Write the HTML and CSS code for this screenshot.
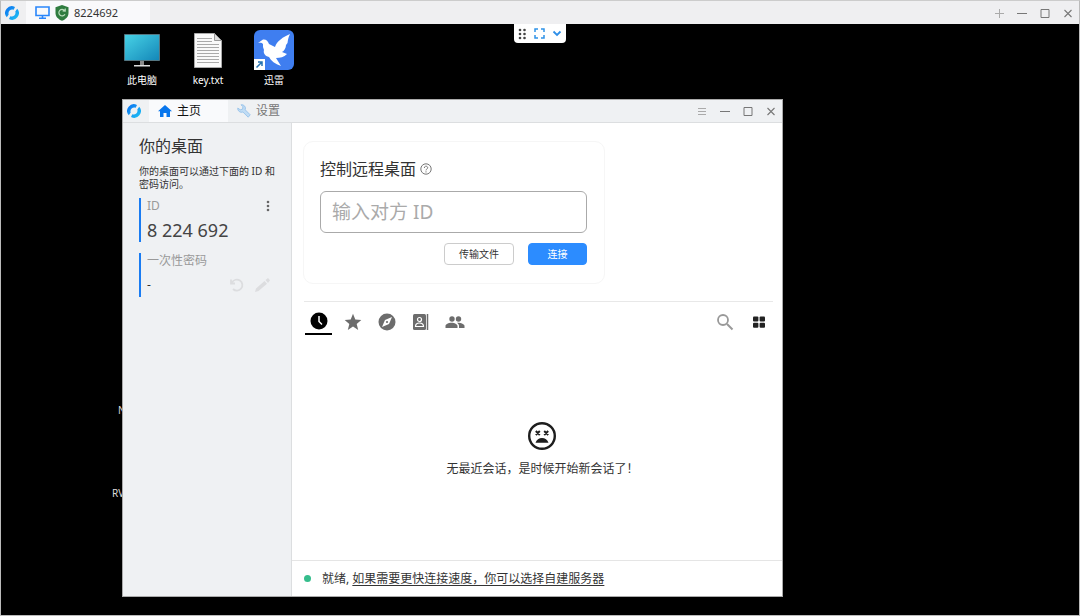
FILE: index.html
```html
<!DOCTYPE html>
<html lang="zh-CN">
<head>
<meta charset="utf-8">
<meta name="viewport" content="width=device-width, initial-scale=1">
<title>8224692</title>
<link rel="stylesheet" href="styles.css">
</head>
<body>
<svg class="defs" aria-hidden="true">
  <defs>
    <linearGradient id="ring" x1="0" y1="0" x2="1" y2="1"><stop offset="0" stop-color="#0a6ff0"/><stop offset="1" stop-color="#20c4f4"/></linearGradient>
    <linearGradient id="screen" x1="0" y1="0" x2="1" y2="1"><stop offset="0" stop-color="#48d3e6"/><stop offset="1" stop-color="#1386b8"/></linearGradient>
    <symbol id="logo" viewBox="0 0 14 14"><path d="M1.800 11.300A6.700 6.700 0 0 1 10 1L8.700 3.700A3.900 3.900 0 0 0 3.700 8.600zM12.200 2.700A6.700 6.700 0 0 1 4 13L5.300 10.300A3.900 3.900 0 0 0 10.300 5.400z" fill="url(#ring)"/></symbol>
    <symbol id="minimize" viewBox="0 0 10 10"><path d="M0 5.500h10" stroke="currentColor"/></symbol>
    <symbol id="maximize" viewBox="0 0 10 10"><path d="M1 1.500h8v8H1z" fill="none" stroke="currentColor"/></symbol>
    <symbol id="close" viewBox="0 0 10 10"><path d="M1.500 2l7 7M8.500 2l-7 7" stroke="currentColor" stroke-width="1.100"/></symbol>
  </defs>
</svg>
<div class="viewer">
  <header class="topbar">
    <svg class="logo"><use href="#logo"/></svg>
    <div class="session-tab">
      <svg width="15" height="13" viewBox="0 0 15 13"><path d="M1 1h13v8.500H1zM7.500 9.500v2.500M4 12.200h7" fill="none" stroke="#2a86fb" stroke-width="1.600"/></svg>
      <svg width="14" height="16" viewBox="0 0 14 16"><path d="M7 0l6.500 2.300V8c0 3.600-2.600 6.200-6.500 7.800C3.100 14.200.5 11.600.5 8V2.300z" fill="#2f7c3f"/><path d="M9.700 5.500A3.300 3.300 0 1 0 10 9.300M7.600 5.800L10.200 6l.1-2.400" fill="none" stroke="#b9dcbb" stroke-width="1.200"/></svg>
      <span>8224692</span>
    </div>
    <div class="window-controls">
      <button aria-label="新建"><svg viewBox="0 0 10 10"><path d="M5.500 1v9M1 5.500h9" stroke="#aaa"/></svg></button>
      <button aria-label="最小化"><svg><use href="#minimize"/></svg></button>
      <button aria-label="最大化"><svg><use href="#maximize"/></svg></button>
      <button aria-label="关闭"><svg><use href="#close"/></svg></button>
    </div>
  </header>

  <main class="desktop">
    <div class="toolbar">
      <button aria-label="移动"><svg width="9" height="12" viewBox="0 0 9 12" fill="#444"><circle cx="2" cy="2" r="1.300"/><circle cx="6.500" cy="2" r="1.300"/><circle cx="2" cy="6" r="1.300"/><circle cx="6.500" cy="6" r="1.300"/><circle cx="2" cy="10" r="1.300"/><circle cx="6.500" cy="10" r="1.300"/></svg></button>
      <button aria-label="全屏"><svg width="11" height="11" viewBox="0 0 11 11"><path d="M1 4V1h3M7 1h3v3M10 7v3H7M4 10H1V7" fill="none" stroke="#2f93e8" stroke-width="1.500"/></svg></button>
      <button aria-label="展开"><svg width="10" height="7" viewBox="0 0 10 7"><path d="M1.500 1.500L5 5l3.500-3.500" fill="none" stroke="#2f8fe8" stroke-width="1.800"/></svg></button>
    </div>

    <div class="shortcuts">
      <div class="shortcut">
        <svg width="36" height="42" viewBox="0 0 36 42"><path d="M.5 5.500h35v26H.5z" fill="url(#screen)" stroke="#547580"/><path d="M16 32h4v4h-4z" fill="#888"/><path d="M10 36h16v1.500H10z" fill="#ddd"/></svg>
        <span>此电脑</span>
      </div>
      <div class="shortcut">
        <svg width="28" height="42" viewBox="0 0 28 42"><path d="M.5 4.500h20l7 7v27H.5z" fill="#fafafa" stroke="#aaa"/><path d="M20.500 4.500v7h7z" fill="#ddd" stroke="#999"/><path d="M3 9.500h15M3 12.500h15M3 15.500h22M3 18.500h22M3 21.500h22M3 24.500h22M3 27.500h22M3 30.500h22M3 33.500h22" stroke="#aaa"/></svg>
        <span>key.txt</span>
      </div>
      <div class="shortcut">
        <svg width="40" height="42" viewBox="0 0 40 42"><rect y="1" width="40" height="40" rx="6" fill="#3f7ef0"/><path d="M4 14L9 10.500C12 10 14 12 15 15L21 18C23 12 29 8 36 5C34 9 34 11 33.500 14L32 16C32 19 30 22 28 23L33 25C30 28 26 29 22 29L27 37C21 35 17 32 15 28C11 27 9 24 10 21L9 18L9 15C8 13.500 6 13.500 4 14z" fill="#fff"/><path d="M0 30h11v11H0z" fill="#fff"/><path d="M2.500 38.500l5-5M4 33h4v4" fill="none" stroke="#2672b0" stroke-width="1.500"/></svg>
        <span>迅雷</span>
      </div>
    </div>
    <span class="hidden-label label-n">N</span>
    <span class="hidden-label label-rv">RV</span>

    <section class="app">
      <header class="app-bar">
        <svg class="logo"><use href="#logo"/></svg>
        <nav class="tabs">
          <button class="tab active"><svg width="14" height="12" viewBox="0 0 14 12"><path d="M7 0l7 6.300h-2V12H8.500V8h-3v4H2V6.300H0z" fill="#0876ed"/></svg>主页</button>
          <button class="tab"><svg width="14" height="14" viewBox="0 0 14 14"><path d="M4 .8A3.700 3.700 0 0 1 8.200 5.800L13.200 10.800 11.200 13.200 5.900 8A3.700 3.700 0 0 1 .8 4L3.200 5.800 5.600 5.200 5.900 2.700z" fill="#c0dcf4" stroke="#9dc6eb"/></svg>设置</button>
        </nav>
        <div class="window-controls">
          <button aria-label="菜单"><svg viewBox="0 0 10 10"><path d="M1 2.500h8M1 5.500h8M1 8.500h8" stroke="#aaa"/></svg></button>
          <button aria-label="最小化"><svg><use href="#minimize"/></svg></button>
          <button aria-label="最大化"><svg><use href="#maximize"/></svg></button>
          <button aria-label="关闭"><svg><use href="#close"/></svg></button>
        </div>
      </header>
      <div class="app-body">
        <aside class="sidebar">
          <h1>你的桌面</h1>
          <p>你的桌面可以通过下面的 ID 和密码访问。</p>
          <div class="credential">
            <div class="row"><span class="caption">ID</span><button aria-label="更多"><svg width="4" height="12" viewBox="0 0 4 12" fill="#666"><circle cx="2" cy="2" r="1.300"/><circle cx="2" cy="6" r="1.300"/><circle cx="2" cy="10" r="1.300"/></svg></button></div>
            <div class="row"><strong>8 224 692</strong></div>
          </div>
          <div class="credential">
            <div class="row"><span class="caption">一次性密码</span></div>
            <div class="row"><span class="password">-</span>
              <span class="actions">
                <button aria-label="刷新"><svg width="14" height="14" viewBox="0 0 14 14"><path d="M2 4.500A5.500 5.500 0 1 1 3 11M1 1.500v4h4" fill="none" stroke="#dcdddf" stroke-width="1.800"/></svg></button>
                <button aria-label="编辑"><svg width="15" height="14" viewBox="0 0 15 14"><path d="M0 14l1-3.500L9.500 3l2.500 2.800L3.500 13zM10.500 2L13 0l2 2.200L13 5z" fill="#dcdddf"/></svg></button>
              </span>
            </div>
          </div>
        </aside>
        <div class="content">
          <form class="connect">
            <div class="connect-title"><label for="peer">控制远程桌面</label><svg width="12" height="12" viewBox="0 0 12 12"><circle cx="6" cy="6" r="5.200" fill="none" stroke="#777"/><path d="M4.300 5C4.300 2.600 7.700 2.700 7.700 4.800 7.700 6 6 6 6 7.400M6 8.300v1.200" fill="none" stroke="#777"/></svg></div>
            <input id="peer" type="text" placeholder="输入对方 ID">
            <div class="buttons"><button type="button">传输文件</button><button type="button" class="primary">连接</button></div>
          </form>
          <div class="peers-bar">
            <button class="active" aria-label="最近会话"><svg viewBox="0 0 18 18"><circle cx="9" cy="9" r="8.500"/><path d="M9 4v5.500l3 3" fill="none" stroke="#fff" stroke-width="1.500"/></svg></button>
            <button aria-label="收藏"><svg viewBox="0 0 18 18"><path d="M9 .8l2.300 5.700 6 .4-4.600 4 1.500 6L9 13.600l-5.200 3.300 1.500-6-4.600-4 6-.4z"/></svg></button>
            <button aria-label="已发现"><svg viewBox="0 0 18 18"><circle cx="9" cy="9" r="8.500"/><path d="M14 4l-3 7-7 3 3-7z" fill="#fff"/><circle cx="9" cy="9" r="1.100"/></svg></button>
            <button aria-label="地址簿"><svg viewBox="0 0 18 18"><rect x="1" y="1" width="13" height="16" rx="1.500"/><path d="M15.500 1v16" stroke="currentColor" stroke-width="1.500"/><circle cx="7.500" cy="6.500" r="2" fill="none" stroke="#fff" stroke-width="1.200"/><path d="M3.500 13.500c0-2 1.500-3.500 4-3.500s4 1.500 4 3.500z" fill="none" stroke="#fff" stroke-width="1.200"/></svg></button>
            <button aria-label="群组" class="wide"><svg viewBox="0 0 20 18"><circle cx="7" cy="6" r="2.700"/><circle cx="13.500" cy="6" r="2.700"/><path d="M.5 15v-2c0-2 3-3.300 6-3.300s6 1.300 6 3.300v2zM13 9.700c3 0 6.500 1.300 6.500 3.300v2H14v-2c0-1.300-.8-2.300-2-3.200z"/></svg></button>
            <span class="spacer"></span>
            <button aria-label="搜索" class="search"><svg viewBox="0 0 18 18"><circle cx="7" cy="7" r="5" fill="none" stroke="#999" stroke-width="1.800"/><path d="M11 11l5.500 5.500" stroke="#999" stroke-width="2"/></svg></button>
            <button aria-label="网格视图" class="grid"><svg viewBox="0 0 18 18"><rect x="3" y="3.500" width="5.400" height="5" rx="1"/><rect x="9.600" y="3.500" width="5.400" height="5" rx="1"/><rect x="3" y="9.700" width="5.400" height="5" rx="1"/><rect x="9.600" y="9.700" width="5.400" height="5" rx="1"/></svg></button>
          </div>
          <div class="empty">
            <svg width="28" height="28" viewBox="0 0 28 28"><circle cx="14" cy="14" r="12.800" fill="none" stroke="#1d1d1d" stroke-width="2.400"/><path d="M7.800 9l4 4M11.800 9l-4 4M16.200 9l4 4M20.200 9l-4 4" stroke="#1d1d1d" stroke-width="1.900"/><path d="M7.500 20.800c1-3.200 3.500-4.800 6.500-4.800s5.500 1.600 6.500 4.800z" fill="#1d1d1d"/></svg>
            <p>无最近会话，是时候开始新会话了！</p>
          </div>
          <footer class="status"><span class="dot"></span><span>就绪, <a href="#">如果需要更快连接速度，你可以选择自建服务器</a></span></footer>
        </div>
      </div>
    </section>
  </main>
</div>
</body>
</html>
```

FILE: styles.css
```css
* { box-sizing: border-box; }
body {
  margin: 0;
  font: 12px/16px "Noto Sans", "Noto Sans CJK SC", sans-serif;
  color: #333;
}
h1, p { margin: 0; font-weight: 400; }
button {
  display: flex;
  align-items: center;
  justify-content: center;
  padding: 0;
  border: 0;
  background: none;
  font: inherit;
  color: inherit;
}
.defs { position: absolute; width: 0; height: 0; }
.viewer {
  display: flex;
  flex-direction: column;
  height: 100vh;
  border: 1px solid #bbb;
  border-top-color: #ccc;
  background: #000;
}
.topbar {
  display: flex;
  flex: none;
  height: 23px;
  align-items: center;
  padding-left: 4px;
  background: #efeff1;
}
.logo { width: 14px; height: 14px; flex: none; }
.session-tab {
  display: flex;
  align-self: stretch;
  align-items: center;
  gap: 5px;
  width: 124px;
  margin-left: 7px;
  padding-left: 9px;
  background: #f9f9fb;
  font-size: 11px;
}
.window-controls {
  display: flex;
  gap: 13px;
  margin-left: auto;
  padding-right: 6px;
  color: #777;
}
.window-controls svg { width: 10px; height: 10px; display: block; }

.desktop { position: relative; flex: 1; min-height: 0; overflow: hidden; }
.toolbar {
  display: flex;
  align-items: center;
  justify-content: center;
  gap: 7px;
  width: 52px;
  height: 19px;
  margin: 0 auto;
  border-radius: 0 0 4px 4px;
  background: #fff;
}
.shortcuts {
  position: absolute;
  left: 108px;
  top: 5px;
  display: flex;
  color: #fff;
  font-size: 10px;
}
.shortcut {
  display: flex;
  flex-direction: column;
  align-items: center;
  gap: 1px;
  width: 66px;
}
.hidden-label { position: absolute; color: #ddd; font-size: 10px; }
.label-n { left: 117px; top: 378px; }
.label-rv { left: 111px; top: 461px; }

.app {
  position: absolute;
  left: 121px;
  top: 75px;
  bottom: 18px;
  width: 61.300%;
  display: flex;
  flex-direction: column;
  border: 1px solid #aaa;
  background: #fff;
}
.app-bar {
  display: flex;
  flex: none;
  height: 23px;
  align-items: center;
  padding-left: 4px;
  border-bottom: 1px solid #dcdee0;
  background: #eff1f3;
}
.tabs { display: flex; align-self: stretch; margin-left: 8px; }
.tab { width: 79px; gap: 5px; padding-right: 18px; color: #777; }
.tab.active { background: #f9fafc; color: #111; }

.app-body { display: flex; flex: 1; min-height: 0; }
.sidebar {
  flex: none;
  width: 169px;
  padding: 12px 13px 0 16px;
  border-right: 1px solid #dcdee0;
  background: #eff1f3;
}
.sidebar h1 { font-size: 16px; line-height: 22px; }
.sidebar p { margin-top: 8px; font-size: 10px; line-height: 13px; }
.credential {
  height: 44px;
  margin: 7px 8px 11px 0;
  padding-left: 6px;
  border-left: 2px solid #1a7cf2;
}
.credential + .credential { margin-top: 0; }
.row { display: flex; align-items: center; justify-content: space-between; min-height: 16px; }
.row + .row { margin-top: 4px; min-height: 24px; }
.caption { color: #999; }
.row strong { font-size: 18px; font-weight: 400; line-height: 24px; color: #444; }
.actions { display: flex; gap: 11px; }
.row button { min-width: 4px; }

.content { display: flex; flex: 1; flex-direction: column; min-width: 0; }
.connect {
  width: 302px;
  margin: 18px 11px 0;
  padding: 16px 17px 18px 16px;
  border: 1px solid #f6f6f6;
  border-radius: 10px;
}
.connect-title { display: flex; align-items: center; gap: 4px; font-size: 16px; line-height: 22px; }
.connect input {
  display: block;
  width: 100%;
  height: 42px;
  margin-top: 11px;
  padding: 0 11px;
  border: 1px solid #aaa;
  border-radius: 6px;
  font: inherit;
  font-size: 19px;
}
.connect input::placeholder { color: #aaa; opacity: 1; }
.buttons { display: flex; justify-content: flex-end; gap: 14px; margin-top: 10px; font-size: 10px; }
.buttons button {
  width: 70px;
  height: 22px;
  border: 1px solid #ccc;
  border-radius: 4px;
}
.buttons .primary { width: 59px; border-color: #2c8cff; background: #2c8cff; color: #fff; }
.peers-bar {
  display: flex;
  align-items: flex-start;
  gap: 7px;
  margin: 17px 9px 0 12px;
  padding: 6px 0 0 1px;
  border-top: 1px solid #e8e8e8;
}
.peers-bar button { width: 27px; height: 27px; color: #6c6c6c; }
.peers-bar svg { width: 18px; height: 18px; fill: currentColor; }
.peers-bar .active { border-bottom: 2px solid #000; color: #000; }
.peers-bar .wide svg { width: 20px; }
.peers-bar .grid { color: #222; }
.spacer { flex: 1; }
.empty {
  display: flex;
  flex: 1;
  flex-direction: column;
  align-items: center;
  justify-content: center;
  gap: 11px;
  padding: 4px 0 0 11px;
}
.status {
  display: flex;
  flex: none;
  align-items: center;
  gap: 11px;
  height: 36px;
  padding-left: 12px;
  border-top: 1px solid #e5e5e5;
}
.status a { color: inherit; text-underline-offset: 2px; }
.dot { width: 7px; height: 7px; border-radius: 50%; background: #35bd8c; }
```
